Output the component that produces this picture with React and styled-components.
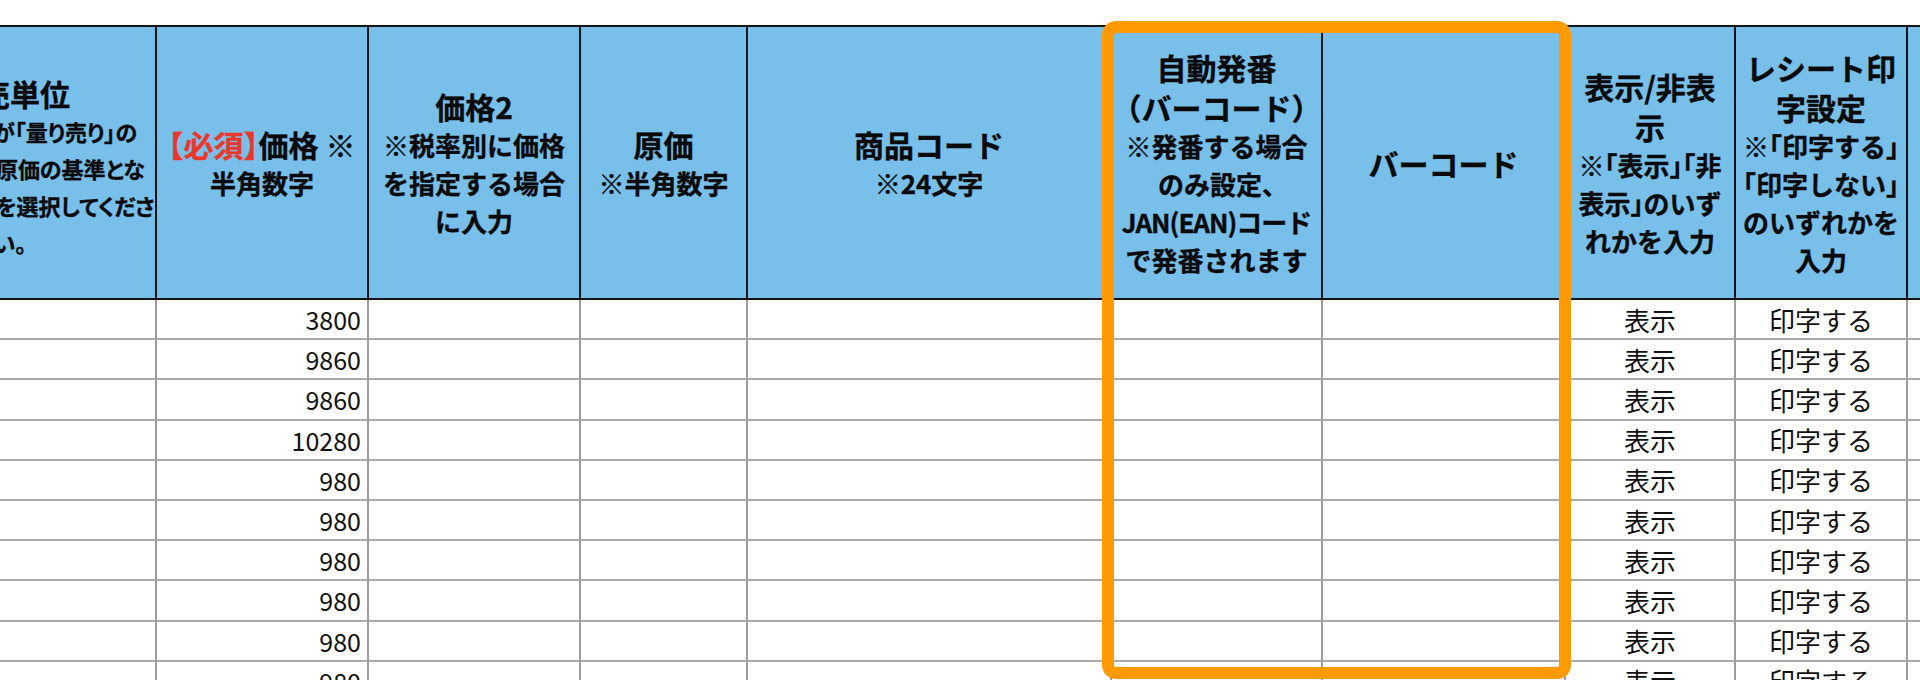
import styled, { createGlobalStyle } from "styled-components";

const GlobalStyle = createGlobalStyle`
  html, body {
    margin: 0;
    padding: 0;
    background: #fff;
  }
  body {
    font-family: "Noto Sans CJK JP", "Noto Sans", sans-serif;
    color: #111;
  }
`;

// widths of the sheet columns, first and last are cut by the window
const COLS = [292, 212, 212, 167, 364, 211, 243, 170, 172, 240];

const HEADERS = [
  {
    title: ["販売単位"],
    sub: [
      "※販売方法が「量り売り」の",
      "場合、商品の原価の基準とな",
      "る計量の単位を選択してくださ",
      "い。",
    ],
    small: true,
  },
  { required: true },
  { title: ["価格2"], sub: ["※税率別に価格", "を指定する場合", "に入力"] },
  { title: ["原価"], sub: ["※半角数字"] },
  { title: ["商品コード"], sub: ["※24文字"] },
  {
    title: ["自動発番", "（バーコード）"],
    sub: ["※発番する場合", "のみ設定、", "JAN(EAN)コード", "で発番されます"],
  },
  { title: ["バーコード"] },
  {
    title: ["表示/非表", "示"],
    sub: ["※「表示」「非", "表示」のいず", "れかを入力"],
  },
  {
    title: ["レシート印", "字設定"],
    sub: ["※「印字する」", "「印字しない」", "のいずれかを", "入力"],
  },
  {},
];

const PRICES = [3800, 9860, 9860, 10280, 980, 980, 980, 980, 980, 980];

const Viewport = styled.div`
  position: relative;
  width: 1920px;
  height: 680px;
  overflow: hidden;
  background: #fff;
`;

const Sheet = styled.div`
  display: grid;
  grid-template-columns: ${COLS.map((w) => w + "px").join(" ")};
  grid-template-rows: 275px;
  grid-auto-rows: 40.2px;
  width: max-content;
  margin: 25px 0 0 -135px;
`;

const HeadCell = styled.div`
  box-sizing: border-box;
  background: #78bfea;
  border-top: 2px solid #151515;
  border-bottom: 2px solid #151515;
  border-right: 2px solid #151515;
  display: flex;
  flex-direction: column;
  justify-content: center;
  align-items: center;
  overflow: hidden;
  text-align: center;
  font-weight: 700;
  color: #0a0a0a;
  -webkit-text-stroke: 0.35px #0a0a0a;
  font-feature-settings: "halt";
  padding-top: ${(p) => (p.$small ? "8px" : "0")};
`;

const Title = styled.div`
  font-size: 30px;
  line-height: 40px;
  white-space: nowrap;
`;

const Sub = styled.div`
  font-size: ${(p) => (p.$small ? "22px" : "26px")};
  line-height: ${(p) => (p.$small ? "37px" : "38px")};
  white-space: nowrap;
  letter-spacing: ${(p) => (p.$tight ? "-1px" : "0")};
  font-feature-settings: ${(p) => (p.$small ? '"palt"' : '"halt"')};
`;

const Required = styled.span`
  color: #e8382c;
  -webkit-text-stroke: 0.35px #e8382c;
`;

const Cell = styled.div`
  box-sizing: border-box;
  border-right: 2px solid #9c9c9c;
  border-bottom: 2px solid #ababab;
  display: flex;
  align-items: center;
  justify-content: ${(p) => p.$align || "center"};
  padding: 0 6px 0 6px;
  font-size: ${(p) => (p.$num ? "25px" : "26px")};
  white-space: nowrap;
  overflow: hidden;
  color: #111;
`;

const Highlight = styled.div`
  position: absolute;
  left: 1102px;
  top: 21px;
  width: 469px;
  height: 658px;
  box-sizing: border-box;
  border: 12px solid #ff9a00;
  border-radius: 14px;
  pointer-events: none;
`;

function Header({ col }) {
  if (col.required) {
    return (
      <HeadCell>
        <Title>
          <Required>【必須】</Required>価格 ※
        </Title>
        <Sub>半角数字</Sub>
      </HeadCell>
    );
  }
  return (
    <HeadCell $small={col.small}>
      {(col.title || []).map((t) => (
        <Title key={t}>{t}</Title>
      ))}
      {(col.sub || []).map((s) => (
        <Sub key={s} $small={col.small} $tight={s.startsWith("JAN")}>
          {s}
        </Sub>
      ))}
    </HeadCell>
  );
}

function Row({ price }) {
  return (
    <>
      <Cell />
      <Cell $align="flex-end" $num>
        {price}
      </Cell>
      <Cell />
      <Cell />
      <Cell />
      <Cell />
      <Cell />
      <Cell>表示</Cell>
      <Cell>印字する</Cell>
      <Cell />
    </>
  );
}

export default function App() {
  return (
    <Viewport>
      <GlobalStyle />
      <Sheet>
        {HEADERS.map((col, i) => (
          <Header key={i} col={col} />
        ))}
        {PRICES.map((p, i) => (
          <Row key={i} price={p} />
        ))}
      </Sheet>
      <Highlight />
    </Viewport>
  );
}
